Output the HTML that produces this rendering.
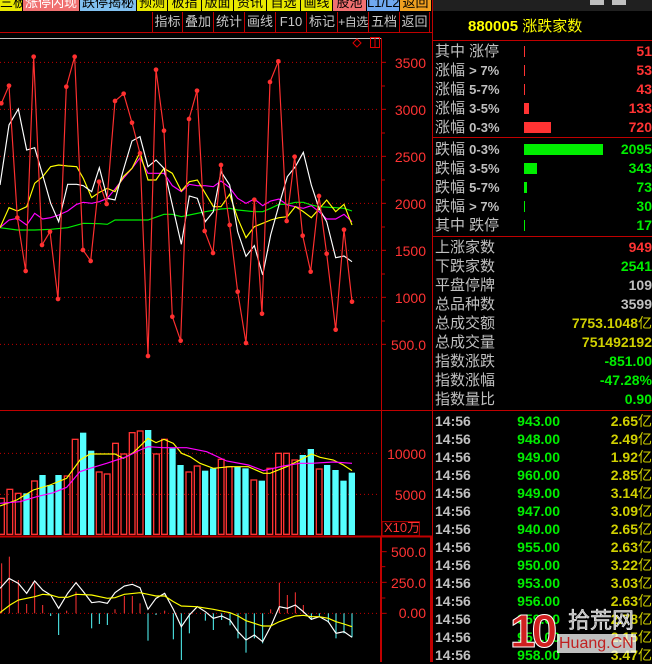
<!DOCTYPE html>
<html><head><meta charset="utf-8"><style>
*{margin:0;padding:0;box-sizing:border-box}
body{width:652px;height:662px;background:#000;overflow:hidden;position:relative;font-family:"Liberation Sans","Noto Sans CJK SC",sans-serif}
.a{position:absolute;white-space:nowrap}
.tb{position:absolute;top:0;height:11px;overflow:hidden;font-size:13px;line-height:13px;padding-top:0;text-align:center;color:#000;border-right:1px solid #000;white-space:nowrap}
.tb span{position:relative;top:-4px}
.btn{position:absolute;top:12px;height:20px;font-size:13px;line-height:20px;color:#c8c8c8;text-align:center;border-left:1px solid #c00000;white-space:nowrap;overflow:hidden}
.lbl{position:absolute;left:435px;font-size:15px;color:#c0c0c0;line-height:19px;height:19px;white-space:nowrap}
.num{position:absolute;right:0;font-size:14px;font-weight:bold;line-height:19px;height:19px;text-align:right;white-space:nowrap}
.tm{position:absolute;left:435px;font-size:14px;font-weight:bold;color:#c0c0c0;line-height:18px}
.pr{position:absolute;left:470px;width:90px;text-align:right;font-size:14px;font-weight:bold;color:#00ee00;line-height:18px}
.vl{position:absolute;right:0;text-align:right;font-size:14px;font-weight:bold;color:#d0d000;line-height:18px;white-space:nowrap}
.ax{position:absolute;font-size:14px;color:#ff3333;text-align:right;width:50px;left:376px;line-height:14px}
</style></head><body>
<div class="tb" style="left:0;width:23px;background:#e8e800"><span>三板</span></div>
<div class="tb" style="left:23px;width:57px;background:#f07070;color:#fff"><span>涨停闪现</span></div>
<div class="tb" style="left:80px;width:57px;background:#80c0f0;color:#000"><span>跌停揭秘</span></div>
<div class="tb" style="left:137px;width:31px;background:#e8e800"><span>预测</span></div>
<div class="tb" style="left:168px;width:34px;background:#e8e800"><span>板指</span></div>
<div class="tb" style="left:202px;width:32px;background:#e8e800"><span>版面</span></div>
<div class="tb" style="left:234px;width:33px;background:#e8e800"><span>资讯</span></div>
<div class="tb" style="left:267px;width:34px;background:#e8e800"><span>自选</span></div>
<div class="tb" style="left:301px;width:32px;background:#e8e800"><span>画线</span></div>
<div class="tb" style="left:333px;width:34px;background:#f07070"><span>股池</span></div>
<div class="tb" style="left:367px;width:33px;background:#70a8f0"><span>L1/L2</span></div>
<div class="tb" style="left:400px;width:32px;background:#f0a020"><span>返回</span></div>
<div class="a" style="left:432px;top:0;width:220px;height:11px;background:#202020"></div>
<div class="a" style="left:590px;top:0;width:14px;height:5px;background:#c0c0c0"></div>
<div class="a" style="left:612px;top:0;width:14px;height:5px;background:#c0c0c0"></div>
<div class="btn" style="left:152px;width:30px">指标</div>
<div class="btn" style="left:182px;width:31px">叠加</div>
<div class="btn" style="left:213px;width:31px">统计</div>
<div class="btn" style="left:244px;width:31px">画线</div>
<div class="btn" style="left:275px;width:31px">F10</div>
<div class="btn" style="left:306px;width:31px">标记</div>
<div class="btn" style="left:337px;width:31px;font-size:12px;letter-spacing:-0.5px">+自选</div>
<div class="btn" style="left:368px;width:31px">五档</div>
<div class="btn" style="left:399px;width:31px;border-right:1px solid #c00000">返回</div>
<div class="a" style="left:0;top:32px;width:432px;height:1px;background:#c00000"></div>
<div class="a" style="left:0;top:38px;width:381px;height:1px;background:#c0c0c0"></div>

<svg class="a" style="left:0;top:0" width="652" height="662">
<line x1="381.5" y1="38" x2="381.5" y2="662" stroke="#c00000"/>
<line x1="432.5" y1="0" x2="432.5" y2="662" stroke="#c00000"/>
<line x1="0" y1="410.5" x2="432" y2="410.5" stroke="#c00000"/>
<line x1="0" y1="536.5" x2="432" y2="536.5" stroke="#c00000" stroke-width="2"/>
<line x1="432" y1="40.5" x2="652" y2="40.5" stroke="#c00000"/>
<line x1="432" y1="137.5" x2="652" y2="137.5" stroke="#c00000"/>
<line x1="432" y1="236.5" x2="652" y2="236.5" stroke="#c00000"/>
<line x1="432" y1="410.5" x2="652" y2="410.5" stroke="#c00000"/>
<line x1="381" y1="537" x2="381" y2="662" stroke="#c00000" stroke-width="2"/>
<line x1="431" y1="537" x2="431" y2="662" stroke="#c00000" stroke-width="2"/>
<path d="M357,39 L361,43 L357,47 L353,43 Z" fill="none" stroke="#e00000"/>
<rect x="370.5" y="37.5" width="9" height="10" fill="none" stroke="#e00000"/>
<line x1="375" y1="38" x2="375" y2="47" stroke="#e00000"/>
<g transform="translate(0,35) scale(0.33333)">
<g stroke="#c00000" stroke-width="3" stroke-dasharray="3,9">
<line x1="0" y1="82" x2="1140" y2="82"/><line x1="0" y1="223" x2="1140" y2="223"/><line x1="0" y1="364" x2="1140" y2="364"/><line x1="0" y1="505" x2="1140" y2="505"/><line x1="0" y1="646" x2="1140" y2="646"/><line x1="0" y1="787" x2="1140" y2="787"/><line x1="0" y1="928" x2="1140" y2="928"/>
</g>
<g stroke="#c00000" stroke-width="3">
<line x1="1143" y1="82" x2="1158" y2="82"/><line x1="1143" y1="153" x2="1155" y2="153"/><line x1="1143" y1="223" x2="1158" y2="223"/><line x1="1143" y1="294" x2="1155" y2="294"/><line x1="1143" y1="364" x2="1158" y2="364"/><line x1="1143" y1="435" x2="1155" y2="435"/><line x1="1143" y1="505" x2="1158" y2="505"/><line x1="1143" y1="576" x2="1155" y2="576"/><line x1="1143" y1="646" x2="1158" y2="646"/><line x1="1143" y1="717" x2="1155" y2="717"/><line x1="1143" y1="787" x2="1158" y2="787"/><line x1="1143" y1="858" x2="1155" y2="858"/><line x1="1143" y1="928" x2="1158" y2="928"/>
</g>
<g fill="none" stroke-width="3.5">
<polyline stroke="#00ee00" points="0,578 52,585 104,585 152,583 203,578 250,565 298,566 322,568 345,555 396,555 444,555 492,538 517,538 544,545 568,540 616,530 663,522 689,520 713,525 763,530 788,530 812,520 837,508 862,508 886,502 910,502 934,510 957,515 1007,518 1032,520 1056,528"/>
<polyline stroke="#ff00ff" points="0,578 27,555 52,550 80,570 104,535 128,552 152,548 176,540 203,528 230,508 250,502 275,505 298,500 322,490 345,462 370,430 396,400 420,368 444,415 468,415 492,415 517,452 544,470 568,448 592,452 616,452 640,455 663,438 689,458 713,490 738,505 763,492 788,512 812,498 837,492 862,510 886,515 910,520 934,512 957,530 980,552 1007,552 1032,538 1056,560"/>
<polyline stroke="#ffff00" points="0,578 27,518 52,528 80,515 104,445 128,425 152,395 176,390 203,393 230,395 250,430 275,488 298,472 322,460 345,470 370,425 396,400 420,352 444,435 468,435 492,400 517,415 544,468 568,440 592,435 616,475 640,515 663,515 689,478 713,550 738,608 763,575 788,565 812,555 837,548 862,545 886,515 910,530 934,548 957,522 980,495 1007,530 1032,508 1056,570"/>
<polyline stroke="#ffffff" points="0,450 27,270 55,222 80,345 104,338 128,420 152,505 176,560 203,448 230,448 250,452 275,470 298,398 322,490 345,495 370,405 396,318 420,305 444,395 468,375 492,400 517,510 544,628 568,483 592,490 616,560 640,530 663,410 689,450 713,590 738,664 763,632 788,720 812,600 837,510 862,425 886,395 910,352 934,450 957,520 980,560 1007,668 1032,663 1056,680"/>
<polyline stroke="#ff3030" points="4,205 27,152 52,548 77,708 101,65 126,630 150,590 174,792 199,155 224,65 249,645 272,678 297,440 320,507 345,198 371,176 396,263 420,355 444,963 468,104 492,287 517,845 542,917 567,252 591,167 614,588 639,654 663,390 689,570 713,770 738,924 763,494 786,836 810,141 835,79 860,558 884,365 908,602 932,710 957,483 980,656 1007,884 1032,584 1056,800"/>
</g>
<g fill="#ff3030">
<circle cx="4" cy="205" r="7"/><circle cx="27" cy="152" r="7"/><circle cx="52" cy="548" r="7"/><circle cx="77" cy="708" r="7"/><circle cx="101" cy="65" r="7"/><circle cx="126" cy="630" r="7"/><circle cx="150" cy="590" r="7"/><circle cx="174" cy="792" r="7"/><circle cx="199" cy="155" r="7"/><circle cx="224" cy="65" r="7"/><circle cx="249" cy="645" r="7"/><circle cx="272" cy="678" r="7"/><circle cx="297" cy="440" r="7"/><circle cx="320" cy="507" r="7"/><circle cx="345" cy="198" r="7"/><circle cx="371" cy="176" r="7"/><circle cx="396" cy="263" r="7"/><circle cx="420" cy="355" r="7"/><circle cx="444" cy="963" r="7"/><circle cx="468" cy="104" r="7"/><circle cx="492" cy="287" r="7"/><circle cx="517" cy="845" r="7"/><circle cx="542" cy="917" r="7"/><circle cx="567" cy="252" r="7"/><circle cx="591" cy="167" r="7"/><circle cx="614" cy="588" r="7"/><circle cx="639" cy="654" r="7"/><circle cx="663" cy="390" r="7"/><circle cx="689" cy="570" r="7"/><circle cx="713" cy="770" r="7"/><circle cx="738" cy="924" r="7"/><circle cx="763" cy="494" r="7"/><circle cx="786" cy="836" r="7"/><circle cx="810" cy="141" r="7"/><circle cx="835" cy="79" r="7"/><circle cx="860" cy="558" r="7"/><circle cx="884" cy="365" r="7"/><circle cx="908" cy="602" r="7"/><circle cx="932" cy="710" r="7"/><circle cx="957" cy="483" r="7"/><circle cx="980" cy="656" r="7"/><circle cx="1007" cy="884" r="7"/><circle cx="1032" cy="584" r="7"/><circle cx="1056" cy="800" r="7"/>
</g>
</g>
<g transform="translate(0,400) scale(0.33333)">
<g stroke="#c00000" stroke-width="3" stroke-dasharray="3,9"><line x1="0" y1="160" x2="1140" y2="160"/><line x1="0" y1="283" x2="1140" y2="283"/></g>
<g fill="none" stroke="#ff3333" stroke-width="4">
<rect x="-4" y="295" width="17" height="108"/><rect x="21" y="268" width="17" height="135"/><rect x="46" y="280" width="17" height="123"/><rect x="95" y="243" width="17" height="160"/><rect x="193" y="228" width="17" height="175"/><rect x="217" y="118" width="17" height="285"/><rect x="289" y="216" width="17" height="187"/><rect x="313" y="222" width="17" height="181"/><rect x="338" y="130" width="17" height="273"/><rect x="363" y="162" width="17" height="241"/><rect x="388" y="98" width="17" height="305"/><rect x="412" y="93" width="17" height="310"/><rect x="461" y="162" width="17" height="241"/><rect x="485" y="118" width="17" height="285"/><rect x="558" y="216" width="17" height="187"/><rect x="583" y="198" width="17" height="205"/><rect x="655" y="178" width="17" height="225"/><rect x="679" y="200" width="17" height="203"/><rect x="753" y="240" width="17" height="163"/><rect x="801" y="205" width="17" height="198"/><rect x="827" y="160" width="17" height="243"/><rect x="851" y="160" width="17" height="243"/><rect x="876" y="180" width="17" height="223"/><rect x="949" y="207" width="17" height="196"/>
</g>
<g fill="#55ffff">
<rect x="70" y="280" width="19" height="125"/><rect x="118" y="225" width="19" height="180"/><rect x="142" y="255" width="19" height="150"/><rect x="166" y="225" width="19" height="180"/><rect x="240" y="98" width="19" height="307"/><rect x="264" y="152" width="19" height="253"/><rect x="435" y="90" width="19" height="315"/><rect x="508" y="145" width="19" height="260"/><rect x="532" y="195" width="19" height="210"/><rect x="606" y="212" width="19" height="193"/><rect x="630" y="205" width="19" height="200"/><rect x="703" y="200" width="19" height="205"/><rect x="727" y="205" width="19" height="200"/><rect x="776" y="242" width="19" height="163"/><rect x="899" y="165" width="19" height="240"/><rect x="923" y="147" width="19" height="258"/><rect x="972" y="195" width="19" height="210"/><rect x="997" y="210" width="19" height="195"/><rect x="1021" y="242" width="19" height="163"/><rect x="1046" y="218" width="19" height="187"/>
</g>
<g fill="none" stroke-width="3.5">
<polyline stroke="#ffff00" points="0,318 50,300 100,270 150,255 200,235 240,180 270,162 345,162 370,175 400,158 444,115 468,128 492,118 520,130 545,160 570,170 600,190 640,205 690,200 745,200 790,220 810,220 860,200 900,180 935,162 960,172 1000,180 1030,195 1056,212"/>
<polyline stroke="#ff00ff" points="0,310 60,305 110,290 160,278 200,262 240,215 270,205 320,190 380,170 420,150 444,140 490,143 560,143 620,155 680,183 745,195 790,212 850,198 900,190 935,190 1000,186 1056,190"/>
</g>
<rect x="1146" y="365" width="112" height="42" fill="none" stroke="#c00000" stroke-width="3"/>
<g stroke="#c00000" stroke-width="3" stroke-dasharray="3,9"><line x1="0" y1="547" x2="1140" y2="547"/><line x1="0" y1="640" x2="1140" y2="640"/></g>
<g stroke="#c00000" stroke-width="3"><line x1="1146" y1="455" x2="1160" y2="455"/><line x1="1146" y1="500" x2="1156" y2="500"/><line x1="1146" y1="547" x2="1160" y2="547"/><line x1="1146" y1="594" x2="1156" y2="594"/><line x1="1146" y1="640" x2="1160" y2="640"/></g>
<g stroke="#ff3333" stroke-width="3">
<line x1="5" y1="640" x2="5" y2="490"/><line x1="28" y1="640" x2="28" y2="470"/><line x1="55" y1="640" x2="55" y2="540"/><line x1="80" y1="640" x2="80" y2="612"/><line x1="104" y1="640" x2="104" y2="550"/><line x1="128" y1="640" x2="128" y2="615"/><line x1="200" y1="640" x2="200" y2="632"/><line x1="228" y1="640" x2="228" y2="575"/><line x1="345" y1="640" x2="345" y2="628"/><line x1="373" y1="640" x2="373" y2="588"/><line x1="397" y1="640" x2="397" y2="588"/><line x1="420" y1="640" x2="420" y2="610"/><line x1="494" y1="640" x2="494" y2="632"/><line x1="812" y1="640" x2="812" y2="628"/><line x1="838" y1="640" x2="838" y2="548"/><line x1="862" y1="640" x2="862" y2="585"/><line x1="886" y1="640" x2="886" y2="577"/><line x1="910" y1="640" x2="910" y2="615"/>
</g>
<g stroke="#55ffff" stroke-width="3">
<line x1="152" y1="640" x2="152" y2="648"/><line x1="176" y1="640" x2="176" y2="705"/><line x1="275" y1="640" x2="275" y2="685"/><line x1="298" y1="640" x2="298" y2="672"/><line x1="322" y1="640" x2="322" y2="675"/><line x1="444" y1="640" x2="444" y2="722"/><line x1="468" y1="640" x2="468" y2="645"/><line x1="520" y1="640" x2="520" y2="718"/><line x1="544" y1="640" x2="544" y2="780"/><line x1="568" y1="640" x2="568" y2="700"/><line x1="616" y1="640" x2="616" y2="662"/><line x1="640" y1="640" x2="640" y2="690"/><line x1="665" y1="640" x2="665" y2="660"/><line x1="690" y1="640" x2="690" y2="676"/><line x1="714" y1="640" x2="714" y2="715"/><line x1="738" y1="640" x2="738" y2="758"/><line x1="763" y1="640" x2="763" y2="715"/><line x1="788" y1="640" x2="788" y2="730"/><line x1="934" y1="640" x2="934" y2="660"/><line x1="958" y1="640" x2="958" y2="650"/><line x1="985" y1="640" x2="985" y2="668"/><line x1="1008" y1="640" x2="1008" y2="715"/><line x1="1032" y1="640" x2="1032" y2="700"/><line x1="1056" y1="640" x2="1056" y2="712"/>
</g>
<g fill="none" stroke-width="3.5">
<polyline stroke="#ffffff" points="0,565 27,535 55,550 80,580 104,543 128,570 152,585 176,625 203,580 228,548 250,575 275,608 298,605 322,610 345,578 373,558 397,553 420,563 444,628 468,595 494,580 520,628 544,680 568,645 592,620 616,635 640,655 665,648 690,660 714,695 738,720 763,705 788,725 812,680 838,620 862,625 886,615 910,635 934,658 958,650 985,665 1008,700 1032,695 1056,712"/>
<polyline stroke="#ffff00" points="0,638 30,615 55,600 104,590 128,583 152,585 176,592 203,592 228,583 275,585 322,595 345,593 373,583 420,578 444,583 468,588 494,588 520,605 544,618 590,620 640,628 690,638 714,648 738,662 788,678 812,678 838,665 886,648 910,646 934,650 958,650 985,655 1008,665 1032,672 1056,680"/>
</g>
</g>
<rect x="524" y="46" width="1" height="11" fill="#ff3333"/>
<rect x="524" y="65" width="1" height="11" fill="#ff3333"/>
<rect x="524" y="84" width="1" height="11" fill="#ff3333"/>
<rect x="524" y="103" width="5" height="11" fill="#ff3333"/>
<rect x="524" y="122" width="27" height="11" fill="#ff3333"/>
<rect x="524" y="144" width="79" height="11" fill="#00ee00"/>
<rect x="524" y="163" width="13" height="11" fill="#00ee00"/>
<rect x="524" y="182" width="3" height="11" fill="#00ee00"/>
<rect x="524" y="201" width="1" height="11" fill="#00ee00"/>
<rect x="524" y="220" width="1" height="11" fill="#00ee00"/>
</svg>

<div class="ax" style="top:56px">3500</div>
<div class="ax" style="top:103px">3000</div>
<div class="ax" style="top:150px">2500</div>
<div class="ax" style="top:197px">2000</div>
<div class="ax" style="top:244px">1500</div>
<div class="ax" style="top:291px">1000</div>
<div class="ax" style="top:338px">500.0</div>
<div class="ax" style="top:447px">10000</div>
<div class="ax" style="top:488px">5000</div>
<div class="a" style="left:384px;top:521px;font-size:13px;color:#ff3333;line-height:14px">X10万</div>
<div class="ax" style="top:545px">500.0</div>
<div class="ax" style="top:576px">250.0</div>
<div class="ax" style="top:606px">0.00</div>

<div class="a" style="left:468px;top:15px;font-size:15px;color:#ffff00;font-weight:bold">880005 <span style="font-weight:normal">涨跌家数</span></div>
<div class="lbl" style="top:42px">其中 涨停</div><div class="num" style="top:42px;color:#ff3333">51</div>
<div class="lbl" style="top:61px">涨幅 <b style="font-size:13px">&gt; 7%</b></div><div class="num" style="top:61px;color:#ff3333">53</div>
<div class="lbl" style="top:80px">涨幅 <b style="font-size:13px">5-7%</b></div><div class="num" style="top:80px;color:#ff3333">43</div>
<div class="lbl" style="top:99px">涨幅 <b style="font-size:13px">3-5%</b></div><div class="num" style="top:99px;color:#ff3333">133</div>
<div class="lbl" style="top:118px">涨幅 <b style="font-size:13px">0-3%</b></div><div class="num" style="top:118px;color:#ff3333">720</div>
<div class="lbl" style="top:140px">跌幅 <b style="font-size:13px">0-3%</b></div><div class="num" style="top:140px;color:#00ee00">2095</div>
<div class="lbl" style="top:159px">跌幅 <b style="font-size:13px">3-5%</b></div><div class="num" style="top:159px;color:#00ee00">343</div>
<div class="lbl" style="top:178px">跌幅 <b style="font-size:13px">5-7%</b></div><div class="num" style="top:178px;color:#00ee00">73</div>
<div class="lbl" style="top:197px">跌幅 <b style="font-size:13px">&gt; 7%</b></div><div class="num" style="top:197px;color:#00ee00">30</div>
<div class="lbl" style="top:216px">其中 跌停</div><div class="num" style="top:216px;color:#00ee00">17</div>

<div class="lbl" style="top:238px">上涨家数</div><div class="num" style="top:238px;color:#ff3333">949</div>
<div class="lbl" style="top:257px">下跌家数</div><div class="num" style="top:257px;color:#00ee00">2541</div>
<div class="lbl" style="top:276px">平盘停牌</div><div class="num" style="top:276px;color:#c0c0c0">109</div>
<div class="lbl" style="top:295px">总品种数</div><div class="num" style="top:295px;color:#c0c0c0">3599</div>
<div class="lbl" style="top:314px">总成交额</div><div class="num" style="top:314px;color:#d0d000">7753.1048<span style="font-weight:normal">亿</span></div>
<div class="lbl" style="top:333px">总成交量</div><div class="num" style="top:333px;color:#d0d000">751492192</div>
<div class="lbl" style="top:352px">指数涨跌</div><div class="num" style="top:352px;color:#00ee00">-851.00</div>
<div class="lbl" style="top:371px">指数涨幅</div><div class="num" style="top:371px;color:#00ee00">-47.28%</div>
<div class="lbl" style="top:390px">指数量比</div><div class="num" style="top:390px;color:#00ee00">0.90</div>

<div class="tm" style="top:412px">14:56</div><div class="pr" style="top:412px">943.00</div><div class="vl" style="top:412px">2.65<span style="font-weight:normal">亿</span></div>
<div class="tm" style="top:430px">14:56</div><div class="pr" style="top:430px">948.00</div><div class="vl" style="top:430px">2.49<span style="font-weight:normal">亿</span></div>
<div class="tm" style="top:448px">14:56</div><div class="pr" style="top:448px">949.00</div><div class="vl" style="top:448px">1.92<span style="font-weight:normal">亿</span></div>
<div class="tm" style="top:466px">14:56</div><div class="pr" style="top:466px">960.00</div><div class="vl" style="top:466px">2.85<span style="font-weight:normal">亿</span></div>
<div class="tm" style="top:484px">14:56</div><div class="pr" style="top:484px">949.00</div><div class="vl" style="top:484px">3.14<span style="font-weight:normal">亿</span></div>
<div class="tm" style="top:502px">14:56</div><div class="pr" style="top:502px">947.00</div><div class="vl" style="top:502px">3.09<span style="font-weight:normal">亿</span></div>
<div class="tm" style="top:520px">14:56</div><div class="pr" style="top:520px">940.00</div><div class="vl" style="top:520px">2.65<span style="font-weight:normal">亿</span></div>
<div class="tm" style="top:538px">14:56</div><div class="pr" style="top:538px">955.00</div><div class="vl" style="top:538px">2.63<span style="font-weight:normal">亿</span></div>
<div class="tm" style="top:556px">14:56</div><div class="pr" style="top:556px">950.00</div><div class="vl" style="top:556px">3.22<span style="font-weight:normal">亿</span></div>
<div class="tm" style="top:574px">14:56</div><div class="pr" style="top:574px">953.00</div><div class="vl" style="top:574px">3.03<span style="font-weight:normal">亿</span></div>
<div class="tm" style="top:592px">14:56</div><div class="pr" style="top:592px">956.00</div><div class="vl" style="top:592px">2.63<span style="font-weight:normal">亿</span></div>
<div class="tm" style="top:610px">14:56</div><div class="pr" style="top:610px">959.00</div><div class="vl" style="top:610px">2.78<span style="font-weight:normal">亿</span></div>
<div class="tm" style="top:628px">14:56</div><div class="pr" style="top:628px">957.00</div><div class="vl" style="top:628px">2.15<span style="font-weight:normal">亿</span></div>
<div class="tm" style="top:646px">14:56</div><div class="pr" style="top:646px">958.00</div><div class="vl" style="top:646px">3.47<span style="font-weight:normal">亿</span></div>

<div class="a" style="left:510px;top:606px;font-size:46px;font-weight:bold;color:#d02020;line-height:50px;-webkit-text-stroke:1px #fff;letter-spacing:-4px">10</div>
<div class="a" style="left:568px;top:608px;font-size:22px;color:#b0b0b0;line-height:26px;-webkit-text-stroke:0.5px #fff">拾荒网</div>
<div class="a" style="left:557px;top:634px;font-size:16px;color:#c02020;line-height:19px;background:rgba(255,255,255,0.75);padding:0 2px">Huang.CN</div>
</body></html>
